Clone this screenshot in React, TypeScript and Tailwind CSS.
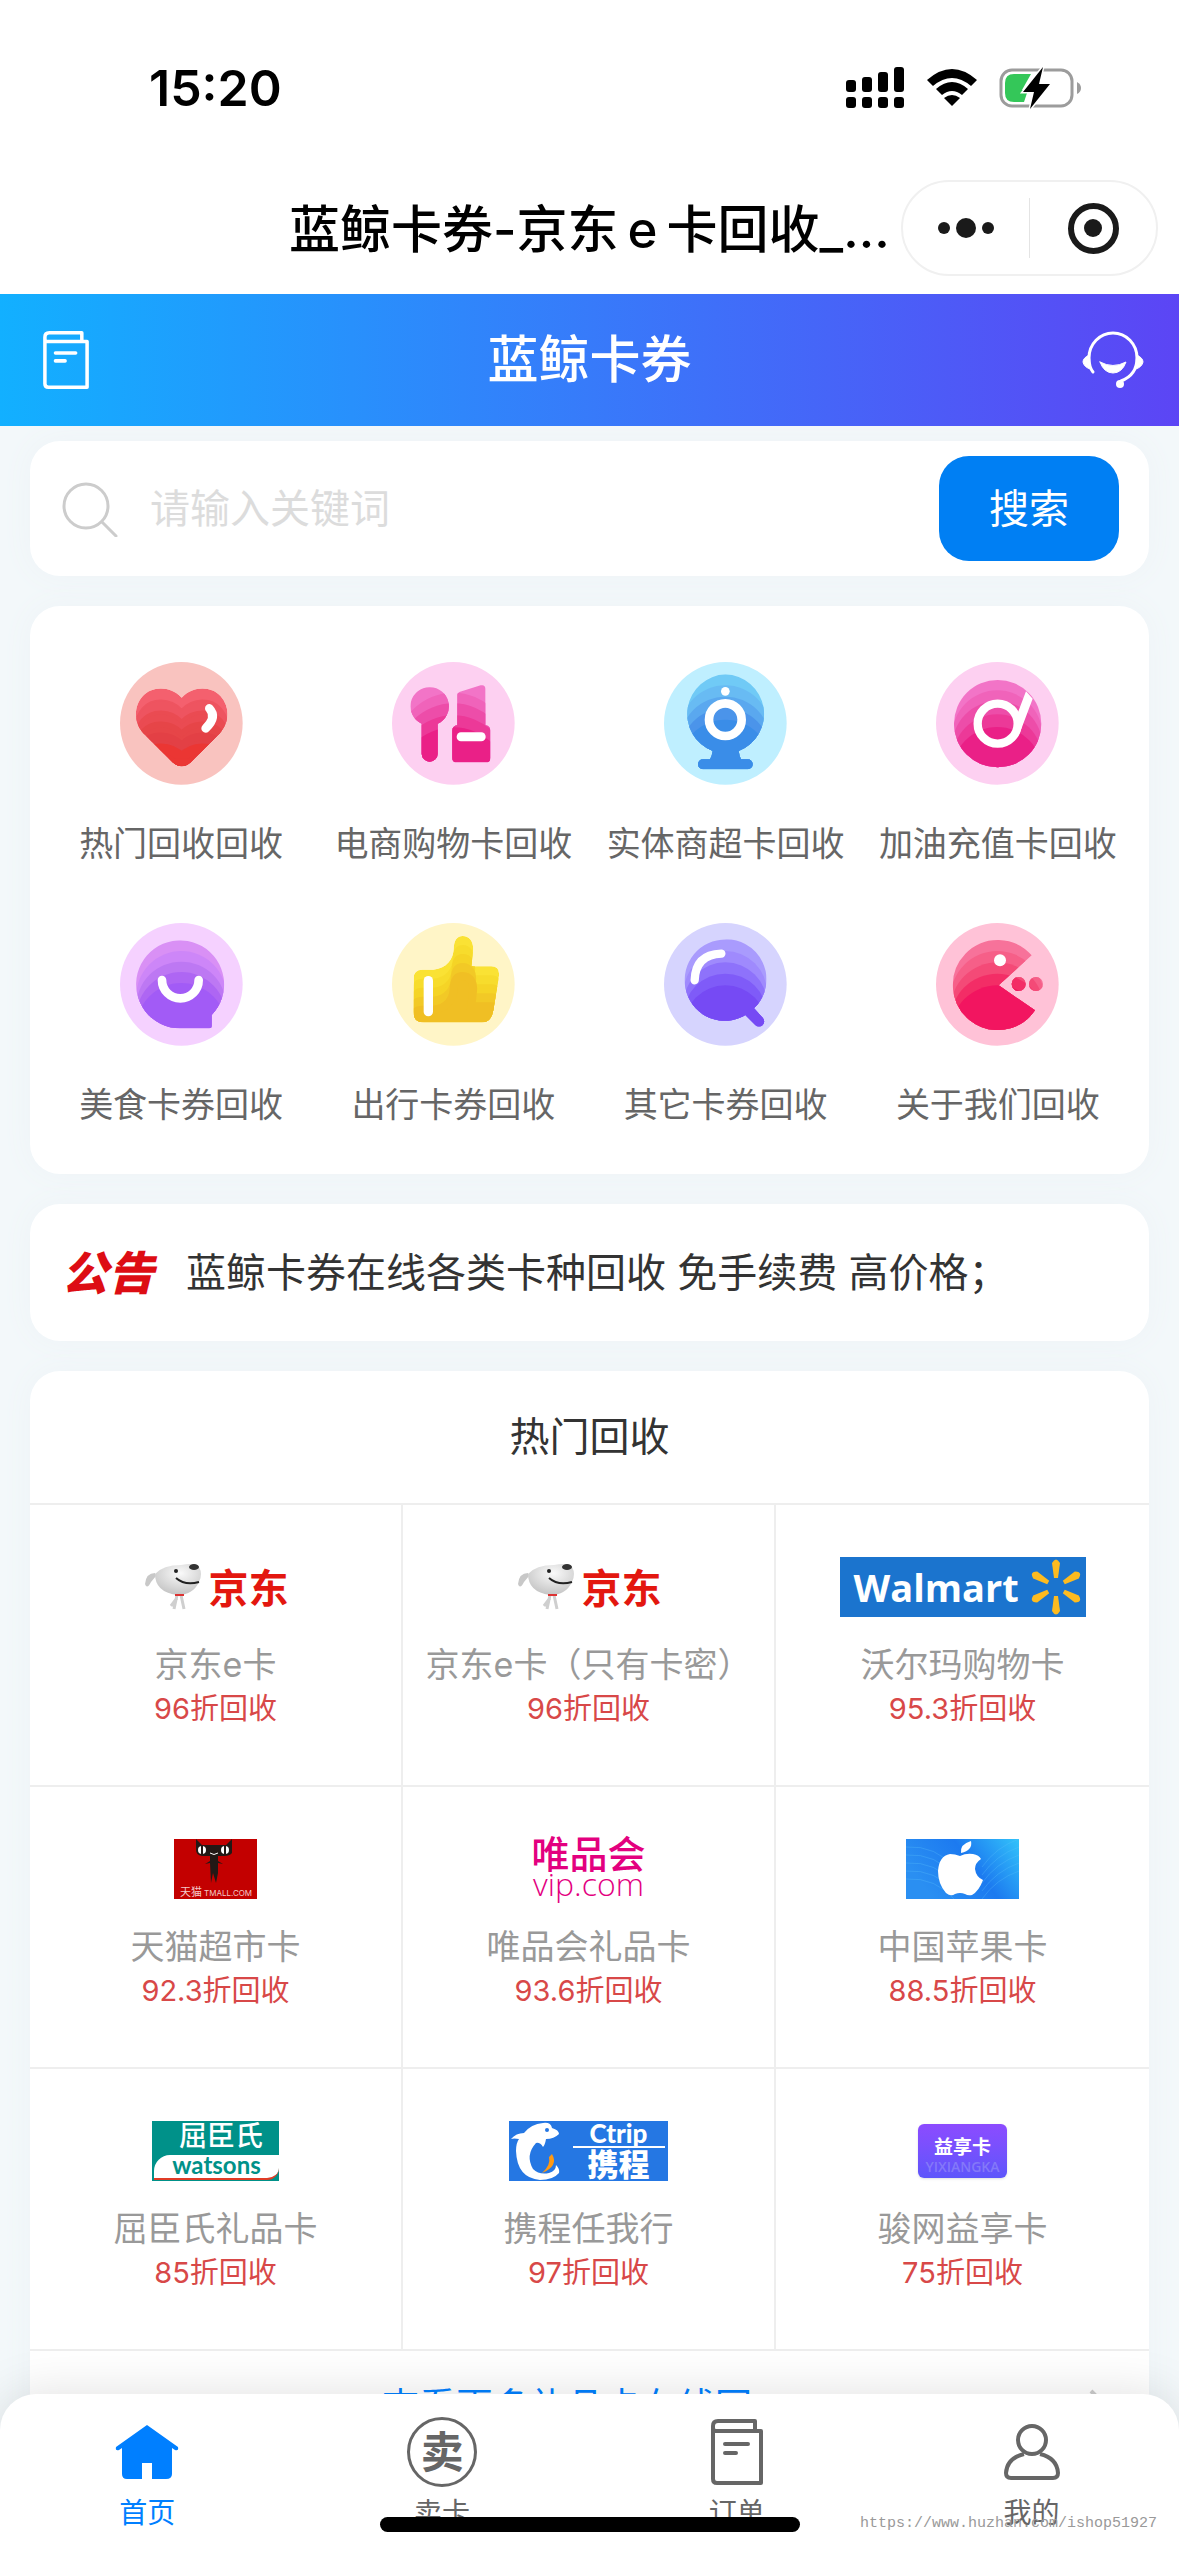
import type { ReactNode } from 'react'

type Category = {
  label: string
  icon: ReactNode
}

type Card = {
  name: string
  rate: string
  logo: ReactNode
}

type LayeredIconProps = {
  id: string
  background: string
  shape: ReactNode
  colors: string[]
  // y of the top of every layer after the first one
  peaks: number[]
  radius?: number
  children?: ReactNode
}

// Round icon: a shape filled with stacked arcs that get darker to the bottom
const LayeredIcon = ({
  id,
  background,
  shape,
  colors,
  peaks,
  radius = 135,
  children,
}: LayeredIconProps) => (
  <svg viewBox="0 0 369 369" className="size-[123px]" aria-hidden="true">
    <circle cx="184" cy="184" r="184" fill={background} />
    <clipPath id={id}>{shape}</clipPath>
    <g clipPath={`url(#${id})`}>
      <rect width="369" height="369" fill={colors[0]} />
      {peaks.map((peak, i) => (
        <path
          key={peak}
          fill={colors[i + 1]}
          d={`M${184 - radius} 369 V${peak + radius} A${radius} ${radius} 0 0 1 ${184 + radius} ${peak + radius} V369Z`}
        />
      ))}
    </g>
    {children}
  </svg>
)

const HEART =
  'M185 107 C150 70 95 72 68 103 C38 137 43 187 72 215 L158 301 Q185 325 212 301 L298 215 C330 180 330 135 302 103 C275 72 220 70 185 107Z'
const THUMB =
  'M65 166 Q65 140 91 140 H124 C165 136 184 108 185 78 C186 50 196 39 212 39 C234 39 246 58 243 84 L238 130 H298 Q324 130 321 158 L304 262 Q298 298 270 298 H95 Q65 298 65 268Z'

type ShiftedIconProps = {
  id: string
  background: string
  d: string
  colors: string[]
  step: number
  children: ReactNode
}

// Same idea, but every layer is the shape itself moved down
const ShiftedIcon = ({ id, background, d, colors, step, children }: ShiftedIconProps) => (
  <svg viewBox="0 0 369 369" className="size-[123px]" aria-hidden="true">
    <circle cx="184" cy="184" r="184" fill={background} />
    <clipPath id={id}>
      <path d={d} />
    </clipPath>
    <g clipPath={`url(#${id})`}>
      {colors.map((color, i) => (
        <path
          key={color}
          d={d}
          fill={color}
          stroke={color}
          strokeWidth={i * 6}
          transform={`translate(0 ${i * step})`}
        />
      ))}
      <rect x="40" y="290" width="290" height="60" fill={colors[colors.length - 1]} />
    </g>
    {children}
  </svg>
)

const PINKS = ['#f274c7', '#f063ba', '#ed4da9', '#ec3998', '#ea2087']

const categories: Category[] = [
  {
    label: '热门回收回收',
    icon: (
      <ShiftedIcon
        id="heart"
        background="#f9c3bf"
        d={HEART}
        colors={['#f4606e', '#ee5460', '#ea4b52', '#e64548', '#e34045', '#eb3633']}
        step={36}
      >
        <path
          d="M268 139 Q292 165 257 199"
          fill="none"
          stroke="#fff"
          strokeWidth="26"
          strokeLinecap="round"
        />
      </ShiftedIcon>
    ),
  },
  {
    label: '电商购物卡回收',
    icon: (
      <LayeredIcon
        id="makeup"
        background="#fdd0f1"
        shape={
          <path d="M114 76 A57 57 0 0 1 137 185 V275 A24 24 0 0 1 89 275 V185 A57 57 0 0 1 114 76Z M196 98 Q196 93 202 90 L266 70 Q280 67 280 80 V190 Q295 192 295 206 V287 Q295 301 281 301 H195 Q181 301 181 287 V206 Q181 192 196 190Z" />
        }
        colors={PINKS}
        peaks={[92, 124, 160, 196]}
        radius={170}
      >
        <rect x="194" y="211" width="87" height="27" rx="13" fill="#fff" />
      </LayeredIcon>
    ),
  },
  {
    label: '实体商超卡回收',
    icon: (
      <LayeredIcon
        id="camera"
        background="#bfefff"
        shape={
          <path d="M184 37 A119 119 0 0 1 224 267 Q226 282 231 292 H251 A15 15 0 0 1 251 322 H117 A15 15 0 0 1 117 292 H138 Q144 282 146 267 A119 119 0 0 1 184 37Z" />
        }
        colors={['#70caf6', '#68bbf3', '#5aa8ef', '#4b94ea', '#3a8de8']}
        peaks={[70, 104, 138, 173]}
      >
        <circle cx="184" cy="173" r="49" fill="none" stroke="#fff" strokeWidth="26" />
        <circle cx="184" cy="88" r="13" fill="#fff" />
      </LayeredIcon>
    ),
  },
  {
    label: '加油充值卡回收',
    icon: (
      <LayeredIcon
        id="fuel"
        background="#fdd0f1"
        shape={<circle cx="185" cy="185" r="131" />}
        colors={PINKS}
        peaks={[85, 117, 157, 195]}
      >
        <circle cx="185" cy="185" r="60" fill="none" stroke="#fff" strokeWidth="25" />
        <path d="M270 88 L290 110 L257 198 Q250 224 230 236 L235 180Z" fill="#fff" />
      </LayeredIcon>
    ),
  },
  {
    label: '美食卡券回收',
    icon: (
      <LayeredIcon
        id="food"
        background="#f5d1ff"
        shape={<path d="M180 316 A132 132 0 1 1 275 276 V309 Q275 316 268 316Z" />}
        colors={['#d990f5', '#cd86f8', '#bd78f3', '#ae66f3', '#a25bf6']}
        peaks={[84, 116, 147, 180]}
      >
        <path
          d="M126 171 A55 55 0 0 0 236 171"
          fill="none"
          stroke="#fff"
          strokeWidth="26"
          strokeLinecap="round"
        />
      </LayeredIcon>
    ),
  },
  {
    label: '出行卡券回收',
    icon: (
      <ShiftedIcon
        id="thumb"
        background="#fff5c7"
        d={THUMB}
        colors={['#fae234', '#f7dc2c', '#f5d426', '#f2c926', '#f0bf24']}
        step={30}
      >
        <rect x="95" y="159" width="28" height="121" rx="14" fill="#fff" />
      </ShiftedIcon>
    ),
  },
  {
    label: '其它卡券回收',
    icon: (
      <LayeredIcon
        id="other"
        background="#d6d4fe"
        shape={
          <path d="M172 50 A120 120 0 0 1 270 256 L296 284 A15 15 0 0 1 274 306 L244 276 A120 122 0 1 1 172 50Z" />
        }
        colors={['#a99bfd', '#9f8afd', '#8e72fb', '#7f5bf8', '#764af4']}
        peaks={[84, 118, 152, 187]}
        radius={125}
      >
        <path
          d="M92 172 Q94 95 172 92"
          fill="none"
          stroke="#fff"
          strokeWidth="25"
          strokeLinecap="round"
        />
      </LayeredIcon>
    ),
  },
  {
    label: '关于我们回收',
    icon: (
      <LayeredIcon
        id="about"
        background="#ffc2d7"
        shape={
          <>
            <path d="M287 97 L188 187 L297 262 A135 135 0 1 1 287 97Z" />
            <circle cx="248" cy="183" r="21" />
            <circle cx="300" cy="183" r="21" />
          </>
        }
        colors={['#f7729a', '#f65f88', '#f44a77', '#f32d66', '#f21560']}
        peaks={[84, 118, 152, 187]}
        radius={140}
      >
        <circle cx="192" cy="112" r="18" fill="#fff" />
      </LayeredIcon>
    ),
  },
]

const JdLogo = () => (
  <div className="flex h-[60px] items-center gap-1">
    <svg viewBox="0 0 62 50" className="h-[50px] w-[62px]" aria-hidden="true">
      <defs>
        <radialGradient id="dog" cx="0.55" cy="0.3" r="0.8">
          <stop offset="0" stopColor="#fafafa" />
          <stop offset="1" stopColor="#bdbdbd" />
        </radialGradient>
      </defs>
      <path d="M12 11 Q3 11 2 22 Q4 28 8 20 L13 14Z" fill="#c8c8c8" />
      <path
        d="M12 12 Q20 3 38 3 Q52 0 56 5 Q60 12 56 20 Q50 33 34 33 Q12 30 12 12Z"
        fill="url(#dog)"
      />
      <ellipse cx="51" cy="5" rx="5" ry="3" fill="#333" />
      <circle cx="33" cy="9" r="2" fill="#222" />
      <path d="M33 16 Q42 24 56 20" fill="none" stroke="#222" strokeWidth="2" />
      <path d="M34 33 L31 47 M38 33 L41 47 M34 36 L28 44" stroke="#cfcfcf" strokeWidth="3" />
      <path d="M32 33 H41" stroke="#d33" strokeWidth="2" />
    </svg>
    <span className="pt-1 text-[40px] leading-none font-bold text-[#e3170f]">京东</span>
  </div>
)

const WalmartLogo = () => (
  <div className="flex h-[60px] w-[246px] items-center bg-[#1b74ce] pl-[14px]">
    <span className="flex-1 font-['Open_Sans'] text-[38px] leading-[60px] font-bold text-white">
      Walmart
    </span>
    <svg viewBox="-26 -28 52 56" className="mr-1 h-[56px] w-[52px]" aria-hidden="true">
      {[0, 60, 120, 180, 240, 300].map((angle) => (
        <path
          key={angle}
          d="M-2 -9 L-4 -24 Q0 -31 4 -24 L2 -9Z"
          fill="#fdbb20"
          transform={`rotate(${angle})`}
        />
      ))}
    </svg>
  </div>
)

const TmallLogo = () => (
  <svg viewBox="0 0 83 60" className="h-[60px] w-[83px]" role="img" aria-label="天猫">
    <rect width="83" height="60" fill="#c30000" />
    <path
      d="M22 0 L28 6 H52 L58 0 V14 Q56 17 50 17 H44 V22 L49 25 L44 24 V34 L42 44 L39 34 L37 44 L36 24 L31 25 L36 22 V17 H28 Q22 16 22 11Z"
      fill="#231815"
    />
    <circle cx="28" cy="11" r="4" fill="#fff" />
    <circle cx="51" cy="11" r="4" fill="#fff" />
    <path d="M28 7 V15 M51 7 V15" stroke="#231815" strokeWidth="2" />
    <path d="M36 14 Q40 17 44 14" stroke="#fff" fill="none" />
    <text x="6" y="57" fontSize="11" fill="#f3c9c9" fontFamily="Noto Sans CJK SC">
      天猫
    </text>
    <text x="30" y="57" fontSize="8" fill="#f3c9c9" fontFamily="Inter">
      TMALL.COM
    </text>
  </svg>
)

const VipLogo = () => (
  <div className="flex h-[60px] flex-col items-center text-[#e3007f]">
    <span className="text-[38px] leading-[30px] font-medium">唯品会</span>
    <span className="font-['Open_Sans'] text-[32px] leading-[30px] font-light">vip.com</span>
  </div>
)

const AppleLogo = () => (
  <svg viewBox="0 0 113 60" className="h-[60px] w-[113px]" role="img" aria-label="Apple">
    <defs>
      <linearGradient id="sky" x1="0" x2="1" y1="0.4" y2="0">
        <stop offset="0" stopColor="#2a8ff2" />
        <stop offset="0.5" stopColor="#1c7af0" />
        <stop offset="1" stopColor="#33c3fa" />
      </linearGradient>
    </defs>
    <rect width="113" height="60" fill="url(#sky)" />
    {[0, 8, 16, 24, 32].map((y) => (
      <path
        key={y}
        d={`M0 ${y + 8} Q30 ${y + 6} 50 ${y + 30} M113 ${y} Q90 ${y + 8} 76 ${y + 28}`}
        fill="none"
        stroke="#5cc4fb"
        strokeOpacity="0.3"
      />
    ))}
    <path d="M55 14 Q54 5 65 2 Q67 11 55 14Z" fill="#fff" />
    <path
      d="M54 17 Q60 14 67 15 Q73 16 75 20 Q69 24 69 30 Q70 38 77 41 Q73 52 66 56 Q62 57 59 55 Q54 53 49 55 Q45 58 40 54 Q32 45 32 32 Q33 17 44 15 Q49 15 54 17Z"
      fill="#fff"
    />
  </svg>
)

const WatsonsLogo = () => (
  <div className="flex h-[60px] w-[127px] flex-col items-end justify-between bg-[#009189] pb-px">
    <span className="pr-4 text-[28px] leading-[30px] font-medium text-white">屈臣氏</span>
    <span className="h-[25px] w-[125px] rounded-tl-2xl rounded-br-xl border-b-2 border-[#e03c26] bg-white text-center font-['Lato'] text-[24px] leading-[20px] font-bold text-[#009189]">
      watsons
    </span>
  </div>
)

const CtripLogo = () => (
  <div className="flex h-[60px] w-[159px] bg-[#2577e3]">
    <svg viewBox="0 0 60 60" className="size-[60px]" aria-hidden="true">
      <path
        d="M2 18 Q7 12 15 12 Q22 3 34 2 Q42 1 43 7 Q50 9 50 13 Q45 18 37 18 Q36 24 34 26 Q31 21 27 22 Q16 34 24 48 Q30 54 40 52 Q47 50 47 44 Q51 48 50 52 Q44 59 31 59 Q8 57 7 30 Q7 22 10 18 Q5 17 2 18Z"
        fill="#fff"
      />
      <circle cx="38" cy="9" r="2" fill="#2577e3" />
      <path d="M43 33 Q50 45 33 52 Q42 44 40 36Z" fill="#ff9912" />
    </svg>
    <div className="flex flex-1 flex-col items-center text-white">
      <span className="font-['Lato'] text-[26px] leading-[25px] font-black">Ctrip</span>
      <span className="h-[2px] w-[92px] bg-white" />
      <span className="text-[31px] leading-[33px] font-black">携程</span>
    </div>
  </div>
)

const YixiangLogo = () => (
  <div className="flex h-[60px] items-center">
    <div className="flex h-[54px] w-[89px] flex-col items-center justify-end rounded-md bg-gradient-to-b from-[#8c4bff] to-[#5d55fb] pb-[2px] shadow">
      <span className="text-[19px] leading-[20px] font-bold text-white">益享卡</span>
      <span className="font-['Open_Sans'] text-[14px] leading-[18px] font-semibold text-[#8478f8]">
        YIXIANGKA
      </span>
    </div>
  </div>
)

const cards: Card[] = [
  { name: '京东e卡', rate: '96', logo: <JdLogo /> },
  { name: '京东e卡（只有卡密）', rate: '96', logo: <JdLogo /> },
  { name: '沃尔玛购物卡', rate: '95.3', logo: <WalmartLogo /> },
  { name: '天猫超市卡', rate: '92.3', logo: <TmallLogo /> },
  { name: '唯品会礼品卡', rate: '93.6', logo: <VipLogo /> },
  { name: '中国苹果卡', rate: '88.5', logo: <AppleLogo /> },
  { name: '屈臣氏礼品卡', rate: '85', logo: <WatsonsLogo /> },
  { name: '携程任我行', rate: '97', logo: <CtripLogo /> },
  { name: '骏网益享卡', rate: '75', logo: <YixiangLogo /> },
]

const BookIcon = ({ className }: { className: string }) => (
  <svg
    viewBox="0 0 52 66"
    className={className}
    fill="none"
    stroke="currentColor"
    strokeWidth="4"
    strokeLinejoin="round"
    aria-hidden="true"
  >
    <path d="M2 12 V7 Q2 2 7 2 H44 V12 M2 9 V60 Q2 64 6 64 H50 V12 H5 Q2 12 2 9" />
    <path d="M14 25 H37 M14 34 H25" strokeLinecap="round" />
  </svg>
)

const HeadsetIcon = () => (
  <svg
    viewBox="0 0 62 58"
    className="h-[58px] w-[62px]"
    fill="none"
    stroke="currentColor"
    strokeWidth="3"
    strokeLinecap="round"
    aria-hidden="true"
  >
    <path d="M11 41 Q7 36 7 27 A24 25 0 0 1 55 27 Q55 44 39 50" />
    <path
      d="M7 24 Q1 27 1 31 Q2 36 8 38Z M55 24 Q61 27 61 31 Q60 36 54 38Z"
      fill="currentColor"
      strokeWidth="1"
    />
    <path d="M18 31 Q31 38 44 31 Q40 42 31 42 Q22 42 18 31Z" fill="currentColor" strokeWidth="1" />
    <circle cx="38" cy="53" r="4" fill="currentColor" stroke="none" />
  </svg>
)

const StatusIcons = () => (
  <svg viewBox="0 0 236 42" className="h-[42px] w-[236px]" aria-hidden="true">
    <g>
      <rect x="0" y="13" width="10" height="12" rx="3" />
      <rect x="16" y="10" width="10" height="15" rx="3" />
      <rect x="32" y="5" width="10" height="20" rx="3" />
      <rect x="48" y="0" width="10" height="25" rx="3" />
      <rect x="0" y="30" width="10" height="11" rx="3" />
      <rect x="16" y="30" width="10" height="11" rx="3" />
      <rect x="32" y="30" width="10" height="11" rx="3" />
      <rect x="48" y="30" width="10" height="11" rx="3" />
    </g>
    <path d="M81 13 Q106 -9 131 13 L125 19 Q106 3 87 19Z" />
    <path d="M90 22 Q106 8 122 22 L116 28 Q106 20 96 28Z" />
    <path d="M98 31 Q106 25 114 31 L106 39Z" />
    <rect x="155" y="3" width="71" height="36" rx="11" fill="none" stroke="#9c9c9c" strokeWidth="3" />
    <path d="M231 15 Q235 17 235 21 Q235 25 231 27Z" fill="#9c9c9c" />
    <path d="M168 7 H185 L176 23 H182 L178 35 H168 Q159 35 159 26 V16 Q159 7 168 7Z" fill="#34c759" />
    <path
      d="M197 0 L177 25 H188 L184 42 L204 17 H193Z"
      stroke="#fff"
      strokeWidth="3"
      paintOrder="stroke"
    />
  </svg>
)

const Panel = ({ className = '', children }: { className?: string; children: ReactNode }) => (
  <section className={`rounded-[30px] bg-white shadow-[0_0_30px_#eef3f7] ${className}`}>
    {children}
  </section>
)

const navItems = [
  {
    label: '首页',
    active: true,
    icon: (
      <svg viewBox="0 0 64 54" className="h-[54px] w-[64px]" fill="currentColor" aria-hidden="true">
        <path d="M32 0 L63 22 Q64 26 60 25 L57 23 V49 Q57 54 51 54 H37 V38 H27 V54 H12 Q7 54 7 49 V23 L4 25 Q0 26 1 22Z" />
      </svg>
    ),
  },
  {
    label: '卖卡',
    active: false,
    icon: (
      <span className="flex size-[70px] items-center justify-center rounded-full border-[3px] border-current text-[43px] leading-none font-bold">
        卖
      </span>
    ),
  },
  { label: '订单', active: false, icon: <BookIcon className="h-[66px] w-[52px]" /> },
  {
    label: '我的',
    active: false,
    icon: (
      <svg
        viewBox="0 0 56 56"
        className="size-[56px]"
        fill="none"
        stroke="currentColor"
        strokeWidth="4"
        aria-hidden="true"
      >
        <ellipse cx="28" cy="16" rx="14" ry="14" />
        <path d="M20 30 Q3 34 2 49 Q2 54 7 54 H49 Q54 54 54 49 Q53 34 36 30" />
      </svg>
    ),
  },
]

export default function App() {
  return (
    <div className="relative h-screen overflow-hidden bg-[#f3f8fa] font-['Inter','Noto_Sans_CJK_SC',sans-serif]">
      <div className="bg-white">
        <div className="flex h-[180px] items-start justify-between pt-[67px] pr-[97px] pl-[149px]">
          <span className="text-[50px] leading-[42px] font-semibold">15:20</span>
          <StatusIcons />
        </div>
        <div className="relative h-[114px] pt-[18px]">
          <h1 className="ml-[289px] text-[51px] leading-[64px] font-medium whitespace-nowrap">
            蓝鲸卡券-京东
            <span className="inline-block w-[48px] text-center">e</span>
            卡回收_...
          </h1>
          <div className="absolute top-0 right-[21px] flex h-[96px] w-[257px] items-center rounded-full border-2 border-[#f0f0f0] bg-white">
            <button
              type="button"
              aria-label="更多"
              className="flex flex-1 items-center justify-center gap-[6px]"
            >
              <span className="size-3 rounded-full bg-[#1a1a1a]" />
              <span className="size-5 rounded-full bg-[#1a1a1a]" />
              <span className="size-3 rounded-full bg-[#1a1a1a]" />
            </button>
            <span className="h-[60px] w-px bg-[#e4e4e4]" />
            <button type="button" aria-label="关闭" className="flex flex-1 justify-center">
              <span className="flex size-[51px] items-center justify-center rounded-full border-[6px] border-[#1a1a1a]">
                <span className="size-[18px] rounded-full bg-[#1a1a1a]" />
              </span>
            </button>
          </div>
        </div>
      </div>

      <header className="relative z-10 flex h-[132px] items-center justify-between bg-linear-to-r/srgb from-[#12b0ff] to-[#5c45f5] px-[35px] text-white">
        <button type="button" aria-label="订单" className="w-[62px] pl-[7px]">
          <BookIcon className="h-[58px] w-[48px]" />
        </button>
        <h2 className="text-[51px] leading-[64px] font-medium">蓝鲸卡券</h2>
        <button type="button" aria-label="客服">
          <HeadsetIcon />
        </button>
      </header>

      <main className="flex flex-col gap-[30px] px-[30px] pt-[15px]">
        <Panel className="flex h-[135px] items-center pr-[30px] pl-[32px]">
          <svg
            viewBox="0 0 56 56"
            className="size-[56px]"
            fill="none"
            stroke="#ccc"
            strokeWidth="3"
            strokeLinecap="round"
            aria-hidden="true"
          >
            <circle cx="24" cy="25" r="22" />
            <path d="M40 41 L54 55" />
          </svg>
          <input
            type="text"
            aria-label="关键词"
            placeholder="请输入关键词"
            className="min-w-0 flex-1 px-8 text-[40px] outline-none placeholder:text-[#dcdcdc]"
          />
          <button
            type="button"
            className="h-[105px] w-[180px] rounded-[30px] bg-[#007ff3] text-[40px] text-white"
          >
            搜索
          </button>
        </Panel>

        <Panel className="grid grid-cols-4 gap-y-[47px] px-[15px] pt-[56px] pb-[37px]">
          {categories.map(({ label, icon }) => (
            <a key={label} href="#" className="flex flex-col items-center gap-[27px]">
              {icon}
              <span className="text-[34px] leading-[64px] whitespace-nowrap text-[#666]">
                {label}
              </span>
            </a>
          ))}
        </Panel>

        <Panel className="flex h-[137px] items-center gap-[32px] px-[32px]">
          <strong className="text-[46px] leading-none font-black text-[#dd0d14] italic">公告</strong>
          <p className="text-[40px] text-[#333]">蓝鲸卡券在线各类卡种回收 免手续费 高价格；</p>
        </Panel>

        <Panel>
          <h3 className="h-[132px] text-center text-[40px] leading-[132px] text-[#333]">热门回收</h3>
          <div className="grid grid-cols-3">
            {cards.map(({ name, rate, logo }) => (
              <a
                key={name}
                href="#"
                className="flex h-[282px] flex-col items-center border-t-2 border-r-2 border-[#eee] pt-[52px] nth-[3n]:border-r-0"
              >
                {logo}
                <span className="mt-[24px] text-[34px] leading-[48px] whitespace-nowrap text-[#999]">
                  {name}
                </span>
                <span className="text-[29px] leading-[40px] text-[#d84848]">{rate}折回收</span>
              </a>
            ))}
          </div>
          <a
            href="#"
            className="relative flex h-[114px] items-center justify-center border-t-2 border-[#eee] pr-[45px] text-[37px] text-[#0080ff]"
          >
            查看更多礼品卡在线回
            <svg
              viewBox="0 0 20 36"
              className="absolute right-[40px] h-[36px] w-[20px]"
              fill="none"
              stroke="#ccc"
              strokeWidth="4"
              aria-hidden="true"
            >
              <path d="M2 2 L18 18 L2 34" />
            </svg>
          </a>
        </Panel>
      </main>

      <nav className="absolute inset-x-0 bottom-0 grid h-[162px] grid-cols-4 rounded-t-[36px] bg-white pt-[20px] shadow-[0_0_50px_#00000020]">
        {navItems.map(({ label, active, icon }) => (
          <a
            key={label}
            href="#"
            className={
              active
                ? 'flex flex-col items-center text-[#007fff]'
                : 'flex flex-col items-center text-[#666]'
            }
          >
            <span className="flex h-[76px] items-center">{icon}</span>
            <span className="text-[28px] leading-[46px]">{label}</span>
          </a>
        ))}
      </nav>
      <div className="absolute bottom-[24px] left-1/2 h-[15px] w-[420px] -translate-x-1/2 rounded-full bg-black" />
      <div className="absolute right-[22px] bottom-[20px] font-['Liberation_Mono'] text-[15px] leading-[24px] text-[#999]">
        https://www.huzhan.com/ishop51927
      </div>
    </div>
  )
}
